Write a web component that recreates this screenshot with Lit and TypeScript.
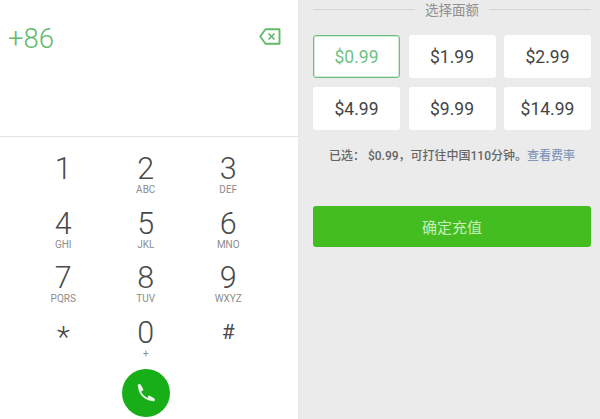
import {LitElement, html, css} from 'lit';
import {customElement} from 'lit/decorators.js';

const KEYS = [
    ['1', ''], ['2', 'ABC'], ['3', 'DEF'],
    ['4', 'GHI'], ['5', 'JKL'], ['6', 'MNO'],
    ['7', 'PQRS'], ['8', 'TUV'], ['9', 'WXYZ'],
    ['*', ''], ['0', '+'], ['#', ''],
];
const AMOUNTS = ['$0.99', '$1.99', '$2.99', '$4.99', '$9.99', '$14.99'];

@customElement('app-root')
export class AppRoot extends LitElement {
    static styles = css`
        :host {
            display: flex;
            width: 600px;
            height: 419px;
            overflow: hidden;
            font-family: Roboto, "Noto Sans CJK SC", sans-serif;
            background: #ebebeb;
        }

        .dialer {
            box-sizing: border-box;
            width: 299px;
            height: 419px;
            flex: none;
            background: #fff;
            border-right: 1px solid #e8e8e8;
            display: flex;
            flex-direction: column;
        }

        .display {
            box-sizing: border-box;
            height: 137px;
            padding: 22px 17px 0 8px;
            border-bottom: 1px solid #e4e4e4;
            display: flex;
            justify-content: space-between;
            align-items: flex-start;
            color: #62bb6a;
        }
        .number {
            font-size: 27.5px;
            font-weight: 300;
            line-height: 33px;
        }
        .del {
            margin-top: 6px;
        }

        .keys {
            display: grid;
            grid-template-columns: repeat(3, 82.5px);
            grid-auto-rows: 54.5px;
            padding: 14px 0 0 22px;
        }
        .key {
            box-sizing: border-box;
            padding-top: 3px;
            display: flex;
            flex-direction: column;
            align-items: center;
            color: #4a4a4a;
        }
        .digit {
            font-size: 30.5px;
            font-weight: 300;
            line-height: 30px;
        }
        .letters {
            font-size: 10px;
            line-height: 12px;
            color: #8c8c8c;
        }
        .star {
            font-size: 30px;
            margin-top: 4px;
        }
        .hash {
            font-size: 21px;
            font-weight: 400;
            margin-top: -1px;
        }

        .call {
            align-self: center;
            width: 48px;
            height: 48px;
            margin: 0 0 0 -7px;
            border-radius: 50%;
            background: #17ae17;
            display: flex;
            align-items: center;
            justify-content: center;
        }

        .topup {
            box-sizing: border-box;
            width: 301px;
            padding: 0 9px 0 14px;
            display: flex;
            flex-direction: column;
        }

        .heading {
            display: flex;
            align-items: center;
            gap: 10px;
            height: 18px;
            font-size: 13.5px;
            color: #8f8f8f;
        }
        .heading::before,
        .heading::after {
            content: '';
            flex: 1;
            height: 1px;
            background: #d6d6d6;
        }

        .amounts {
            display: grid;
            grid-template-columns: repeat(3, 87px);
            grid-auto-rows: 43px;
            gap: 9px 8.5px;
            margin-top: 17px;
        }
        .amount {
            box-sizing: border-box;
            background: #fff;
            border-radius: 3px;
            display: flex;
            align-items: center;
            justify-content: center;
            font-size: 17.5px;
            color: #444;
        }
        .amount.on {
            border: 1px solid #6cc07c;
            box-shadow: inset 0 0 0 1px rgba(108, 192, 124, 0.3);
            color: #6fc282;
        }

        .note {
            margin-top: 18px;
            height: 16px;
            line-height: 16px;
            font-size: 12px;
            font-weight: 500;
            text-align: center;
            white-space: nowrap;
            color: #666;
        }
        .note a {
            color: #8296ba;
        }

        .confirm {
            margin-top: 42px;
            height: 41px;
            border-radius: 3px;
            background: #44bd20;
            color: #c9eebd;
            font-size: 15px;
            display: flex;
            align-items: center;
            justify-content: center;
        }
    `

    render() {
        return html`
        <div class="dialer">
            <div class="display">
                <span class="number">+86</span>
                <svg class="del" width="22" height="17" viewBox="0 0 22 17" fill="none" stroke="#62bb6a">
                    <path d="M6.5 1.2H20.5V15.8H6.5L1.2 8.5Z" stroke-width="1.9" stroke-linejoin="round"/>
                    <path d="M9.5 5.5L15.5 11.5M15.5 5.5L9.5 11.5" stroke-width="1.7"/>
                </svg>
            </div>
            <div class="keys">
                ${KEYS.map(([d, l]) => html`
                    <div class="key">
                        <span class="digit ${d === '*' ? 'star' : d === '#' ? 'hash' : ''}">${d}</span>
                        <span class="letters">${l}</span>
                    </div>
                `)}
            </div>
            <div class="call">
                <svg width="20" height="20" viewBox="0 0 20 20" fill="none" stroke="#eaf8e6" stroke-linecap="round">
                    <path d="M3.2 4.5C3.2 10.5 9.5 16.8 15.5 16.8" stroke-width="1.8"/>
                    <path d="M3.4 2.8L5.6 6.6M13.4 14.4L17.2 16.6" stroke-width="3.4"/>
                </svg>
            </div>
        </div>
        <div class="topup">
            <div class="heading">选择面额</div>
            <div class="amounts">
                ${AMOUNTS.map((a, i) => html`<div class="amount ${i === 0 ? 'on' : ''}">${a}</div>`)}
            </div>
            <div class="note">已选： $0.99，可打往中国110分钟。<a>查看费率</a></div>
            <div class="confirm">确定充值</div>
        </div>
        `
    }
}
